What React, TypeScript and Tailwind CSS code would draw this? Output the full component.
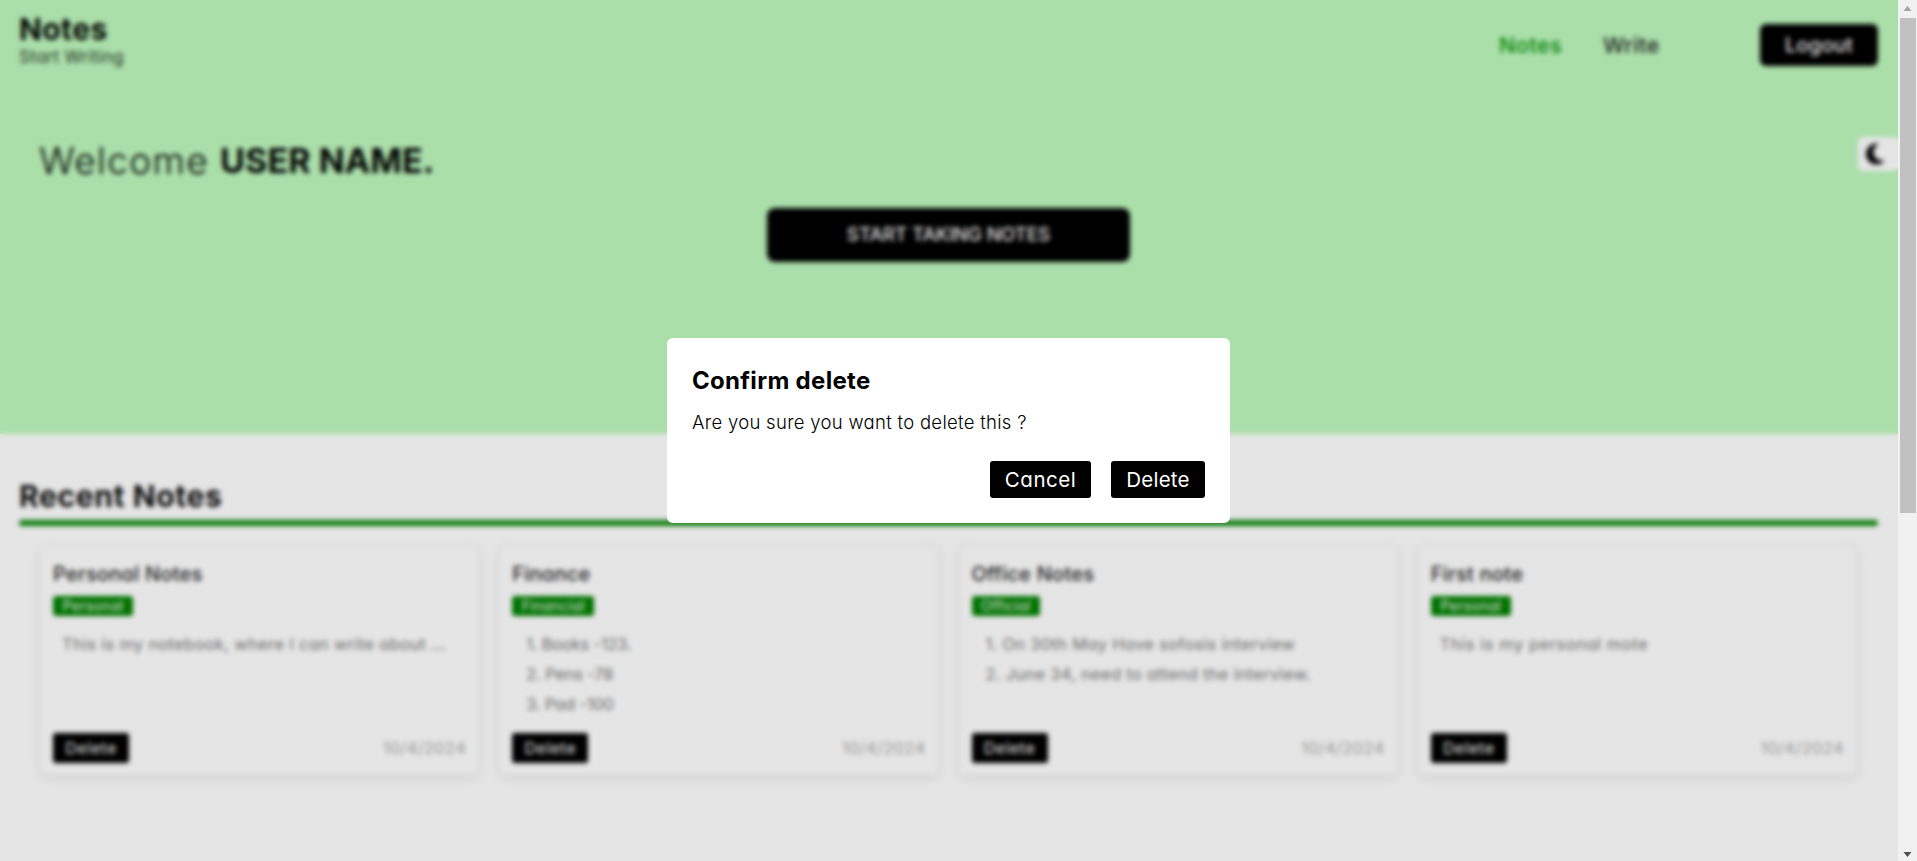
import { FaMoon } from "react-icons/fa6";

type Note = {
  title: string;
  tag: string;
  body?: string;
  items?: string[];
  tracking: string;
};

const notes: Note[] = [
  {
    title: "Personal Notes",
    tag: "Personal",
    body: "This is my notebook, where I can write about ...",
    tracking: "tracking-[0.3px]",
  },
  {
    title: "Finance",
    tag: "Financial",
    items: ["Books -123.", "Pens -78", "Pad -100"],
    tracking: "tracking-[-0.2px]",
  },
  {
    title: "Office Notes",
    tag: "Official",
    items: [
      "On 30th May Have sofosis interview",
      "June 34, need to attend the interview.",
    ],
    tracking: "tracking-[0.27px]",
  },
  {
    title: "First note",
    tag: "Personal",
    body: "This is my personal mote",
    tracking: "tracking-[0.54px]",
  },
];

function Header() {
  return (
    <header className="flex h-[90px] items-start justify-between px-5">
      <div className="-ml-px pt-[14px]">
        <h1 className="text-[30px] leading-[30px] font-bold tracking-[0.4px]">
          Notes
        </h1>
        <p className="mt-px text-[17px] leading-6 tracking-[0.3px] text-black/85">
          Start Writing
        </p>
      </div>
      <nav className="flex items-center pt-6 text-[21.5px] font-medium">
        <a className="w-[104px] tracking-[0.5px] text-[#008f00]">Notes</a>
        <a className="w-[157px] tracking-[0.4px] text-[#222]">Write</a>
        <button className="h-[42px] w-[118px] rounded-md bg-black text-[20px] tracking-[0.2px] text-white">
          Logout
        </button>
      </nav>
    </header>
  );
}

function NoteCard({ note }: { note: Note }) {
  return (
    <article className="flex h-[229px] flex-col rounded-[5px] border border-black/5 bg-white px-3 pt-3 pb-[11px] shadow-[0_3px_12px_rgba(0,0,0,0.09)]">
      <h3 className="text-[20px] leading-[30px] font-medium tracking-[0.25px] text-[#222]">
        {note.title}
      </h3>
      <span className="mt-[7px] h-5 self-start rounded-[3px] bg-[#008000] px-[9.5px] text-[14px] leading-5 tracking-[0.34px] text-white">
        {note.tag}
      </span>
      <div
        className={`mt-[13px] grow px-[9px] text-[16.5px] leading-[30px] text-[#777] ${note.tracking}`}
      >
        {note.body && <p>{note.body}</p>}
        {note.items && (
          <ol className="pl-[5px]">
            {note.items.map((item, i) => (
              <li key={item}>
                {i + 1}. {item}
              </li>
            ))}
          </ol>
        )}
      </div>
      <div className="flex h-[30px] items-center justify-between">
        <button className="h-[30px] w-[76px] rounded-[3px] bg-black text-[16px] leading-[30px] tracking-[0.5px] text-white">
          Delete
        </button>
        <time className="text-[16.5px] tracking-[0.35px] text-[#aaa]">
          10/4/2024
        </time>
      </div>
    </article>
  );
}

function ConfirmDialog() {
  return (
    <div
      role="dialog"
      className="mr-px flex h-[185px] w-[563px] flex-col rounded-md bg-white pt-7 pr-[26px] pl-[25px] text-black"
    >
      <h2 className="text-[24px] leading-[30px] font-bold tracking-[0.3px]">
        Confirm delete
      </h2>
      <p className="mt-3 text-[18.5px] leading-7 font-light tracking-[0.3px]">
        Are you sure you want to delete this ?
      </p>
      <div className="mt-[25px] -mr-px flex justify-end gap-5 text-[20.5px] text-white">
        <button className="h-[37px] w-[101px] rounded-[3px] bg-black pt-px tracking-[0.5px]">
          Cancel
        </button>
        <button className="h-[37px] w-[94px] rounded-[3px] bg-black pt-px tracking-[0.25px]">
          Delete
        </button>
      </div>
    </div>
  );
}

function Scrollbar() {
  return (
    <div className="flex h-full w-[19px] flex-col items-center bg-[#f1f1f1]">
      <svg className="h-[18px] w-[17px] shrink-0" viewBox="0 0 17 18">
        <path d="M4.5 11h8L8.500 6z" fill="#a3a3a3" />
      </svg>
      <div className="h-[495px] w-4 bg-[#c1c1c1]" />
      <svg className="mt-auto h-[17px] w-[17px] shrink-0" viewBox="0 0 17 17">
        <path d="M4.500 8h8L8.500 13z" fill="#505050" />
      </svg>
    </div>
  );
}

export default function App() {
  return (
    <div className="flex h-[861px] w-full overflow-hidden bg-white font-['Inter',sans-serif] text-black [font-feature-settings:'cv11']">
      <div className="relative h-full min-w-0 grow overflow-hidden">
        <section className="h-[434px] bg-[#bef9be]">
          <Header />
          <div className="px-[39px] pt-[46px]">
            <h2 className="flex gap-[11px] text-[34px] leading-[50px]">
              <span className="text-[37px] font-light tracking-[1.4px]">
                Welcome
              </span>
              <span className="font-bold tracking-[0.1px]">USER NAME.</span>
            </h2>
          </div>
          <div className="mt-[22px] flex justify-center pr-px">
            <button className="h-[54px] w-[363px] rounded-lg bg-black text-[19px] font-medium tracking-[-0.2px] text-white">
              START TAKING NOTES
            </button>
          </div>
        </section>
        <main className="px-5 pt-[42px]">
          <h2 className="-ml-px text-[30px] leading-[40px] font-bold tracking-[0.6px] text-[#0a0a0a]">
            Recent Notes
          </h2>
          <div className="mt-1 -ml-px h-[6px] rounded-full bg-[#0a880a]" />
          <div className="mt-5 grid grid-cols-4 gap-5 pr-[21px] pl-5">
            {notes.map((note) => (
              <NoteCard key={note.title} note={note} />
            ))}
          </div>
        </main>
        <button className="absolute top-[137px] right-0 flex h-[34px] w-10 items-center rounded-[5px] bg-white pl-[5px]">
          <FaMoon className="size-6" />
        </button>
        <div className="absolute inset-0 flex items-center justify-center bg-black/10 backdrop-blur-[2.5px]">
          <ConfirmDialog />
        </div>
      </div>
      <Scrollbar />
    </div>
  );
}
